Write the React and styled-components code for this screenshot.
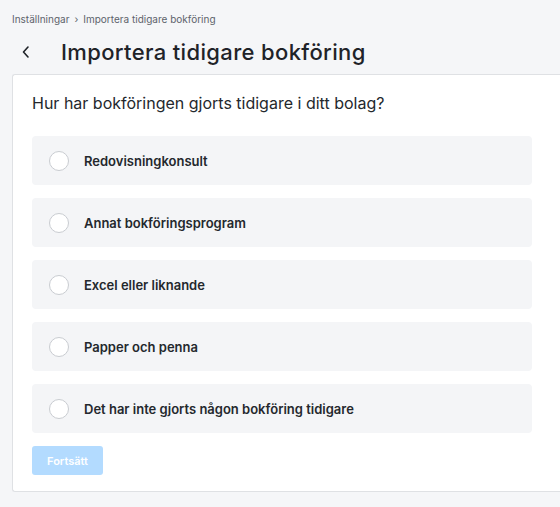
import React, { useState } from "react";
import styled, { createGlobalStyle } from "styled-components";

const Global = createGlobalStyle`
  html, body { margin: 0; padding: 0; background: #f5f6f8; }
  body { font-family: Inter, "Noto Sans", sans-serif; color: #1f2328; }
  * { box-sizing: border-box; }
`;

const options = [
  "Redovisningkonsult",
  "Annat bokföringsprogram",
  "Excel eller liknande",
  "Papper och penna",
  "Det har inte gjorts någon bokföring tidigare",
];

const Page = styled.div`
  padding: 13px 0 15px 12px;
  min-height: 507px;
`;

const Crumbs = styled.div`
  font-size: 10px;
  color: #5d636b;
  display: flex;
  align-items: center;
  gap: 5px;
  height: 12px;
`;

const Header = styled.div`
  display: flex;
  align-items: center;
  height: 38px;
  margin: 8px 0 3px;
`;

const Back = styled.button`
  border: none;
  background: none;
  padding: 0;
  width: 28px;
  margin: 0 21px 0 0;
  display: flex;
  align-items: center;
  justify-content: center;
  color: #1f2328;
  cursor: pointer;
`;

const Title = styled.h1`
  margin: 0;
  font-size: 22px;
  font-weight: 500;
  letter-spacing: 0.35px;
  color: #1f2328;
`;

const Card = styled.section`
  background: #fff;
  border: 1px solid #dfe1e4;
  border-right: none;
  border-radius: 3px 0 0 3px;
  padding: 17px 28px 16px 19px;
`;

const Question = styled.h2`
  margin: 0 0 22px;
  font-size: 16px;
  font-weight: 400;
  color: #24282d;
  line-height: 22px;
`;

const List = styled.div`
  display: flex;
  flex-direction: column;
  gap: 13px;
`;

const Option = styled.label`
  display: flex;
  align-items: center;
  height: 49px;
  padding: 0 17px;
  background: #f4f5f7;
  border-radius: 4px;
  cursor: pointer;
  font-size: 13px;
  font-weight: 600;
  color: #24282d;
`;

const Radio = styled.span`
  width: 20px;
  height: 20px;
  border-radius: 50%;
  border: 1px solid ${(p) => (p.$checked ? "#3a8dff" : "#c9ccd1")};
  background: #fff;
  margin-right: 15px;
  flex-shrink: 0;
  display: flex;
  align-items: center;
  justify-content: center;
  &::after {
    content: "";
    width: 10px;
    height: 10px;
    border-radius: 50%;
    background: ${(p) => (p.$checked ? "#3a8dff" : "transparent")};
  }
`;

const Button = styled.button`
  margin-top: 13px;
  width: 71px;
  height: 29px;
  border: none;
  border-radius: 3px;
  background: ${(p) => (p.disabled ? "#b3dbff" : "#3a8dff")};
  color: #fff;
  font-family: inherit;
  font-size: 11px;
  font-weight: 600;
  cursor: ${(p) => (p.disabled ? "default" : "pointer")};
`;

export default function App() {
  const [choice, setChoice] = useState(null);
  return (
    <>
      <Global />
      <Page>
        <Crumbs>
          <span>Inställningar</span>
          <span>›</span>
          <span>Importera tidigare bokföring</span>
        </Crumbs>
        <Header>
          <Back aria-label="Tillbaka">
            <svg width="10" height="14" viewBox="0 0 10 14" fill="none">
              <path d="M7 2L2.5 7L7 12" stroke="#1f2328" strokeWidth="1.6" strokeLinecap="round" strokeLinejoin="round" />
            </svg>
          </Back>
          <Title>Importera tidigare bokföring</Title>
        </Header>
        <Card>
          <Question>Hur har bokföringen gjorts tidigare i ditt bolag?</Question>
          <List>
            {options.map((o) => (
              <Option key={o} onClick={() => setChoice(o)}>
                <Radio $checked={choice === o} />
                {o}
              </Option>
            ))}
          </List>
          <Button disabled={!choice}>Fortsätt</Button>
        </Card>
      </Page>
    </>
  );
}
